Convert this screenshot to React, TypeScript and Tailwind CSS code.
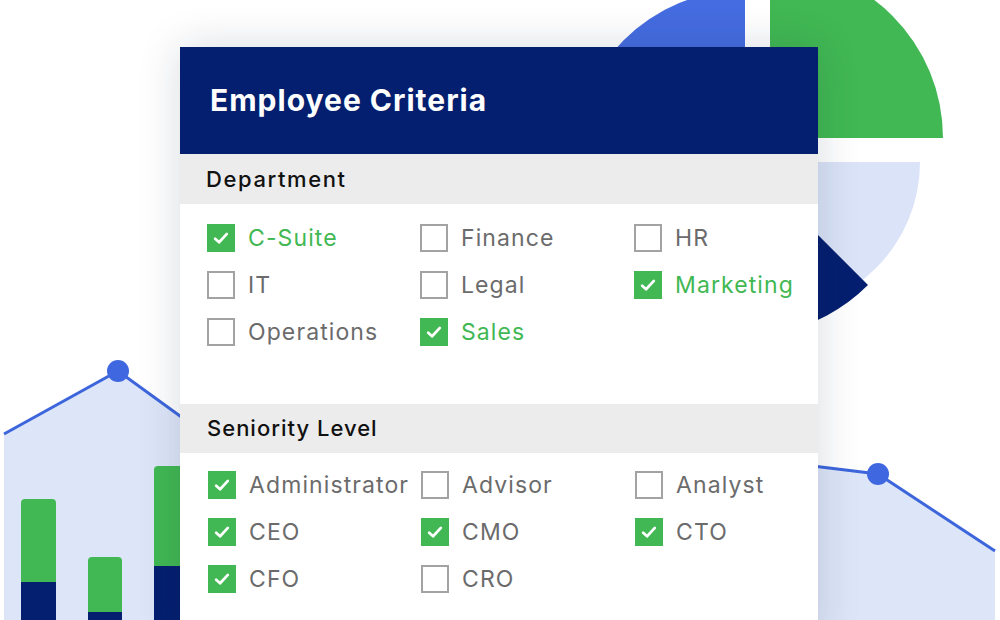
import React from "react";

type Item = { label: string; checked: boolean };

const dept: Item[] = [
  { label: "C-Suite", checked: true },
  { label: "Finance", checked: false },
  { label: "HR", checked: false },
  { label: "IT", checked: false },
  { label: "Legal", checked: false },
  { label: "Marketing", checked: true },
  { label: "Operations", checked: false },
  { label: "Sales", checked: true },
];

const seniority: Item[] = [
  { label: "Administrator", checked: true },
  { label: "Advisor", checked: false },
  { label: "Analyst", checked: false },
  { label: "CEO", checked: true },
  { label: "CMO", checked: true },
  { label: "CTO", checked: true },
  { label: "CFO", checked: true },
  { label: "CRO", checked: false },
];

function Box({ checked }: { checked: boolean }) {
  if (checked) {
    return (
      <span className="flex h-[28px] w-[28px] shrink-0 items-center justify-center bg-[#41b853]">
        <svg width="18" height="18" viewBox="0 0 16 16" fill="none">
          <path d="M2.8 8.6 L6.3 11.8 L13.2 4.4" stroke="white" strokeWidth="2.4" strokeLinecap="round" strokeLinejoin="round" />
        </svg>
      </span>
    );
  }
  return <span className="h-[28px] w-[28px] shrink-0 border-2 border-[#a3a3a3] bg-white" />;
}

function Grid({ items, colorChecked, pad }: { items: Item[]; colorChecked: boolean; pad: string }) {
  return (
    <div className={`grid grid-cols-[213px_214px_1fr] ${pad}`}>
      {items.map((it) => (
        <div key={it.label} className="flex h-[47px] items-center gap-[13px]">
          <Box checked={it.checked} />
          <span
            className={`pt-[2px] text-[23px] leading-none tracking-[1.1px] ${
              it.checked && colorChecked ? "text-[#41b853]" : "text-[#6b6b6b]"
            }`}
          >
            {it.label}
          </span>
        </div>
      ))}
    </div>
  );
}

function Background() {
  return (
    <svg className="absolute inset-0" width="1000" height="620" viewBox="0 0 1000 620">
      {/* pie */}
      <path d="M745,162 L573,162 A172,172 0 0 1 745,-10 Z" fill="#456ce0" />
      <path d="M770,138 L770,-35 A173,173 0 0 1 943,138 Z" fill="#41b853" />
      <path d="M770,162 L920,162 A150,150 0 0 1 770,312 Z" fill="#dae3f7" />
      <path d="M745,162 L868,285 A174,174 0 0 1 571,162 Z" fill="#041f6f" />
      {/* left area chart */}
      <path d="M4,434 L118,371 L220,445 L220,620 L4,620 Z" fill="#dde6f8" />
      <path d="M4,434 L118,371 L220,445" stroke="#3d66dc" strokeWidth="3" fill="none" />
      <circle cx="118" cy="371" r="11" fill="#3f68e0" />
      {/* bars */}
      <path d="M21,503 Q21,499 25,499 L52,499 Q56,499 56,503 L56,620 L21,620 Z" fill="#41b853" />
      <rect x="21" y="582" width="35" height="38" fill="#041f6f" />
      <path d="M88,561 Q88,557 92,557 L118,557 Q122,557 122,561 L122,620 L88,620 Z" fill="#41b853" />
      <rect x="88" y="612" width="34" height="8" fill="#041f6f" />
      <path d="M154,470 Q154,466 158,466 L196,466 Q200,466 200,470 L200,620 L154,620 Z" fill="#41b853" />
      <rect x="154" y="566" width="46" height="54" fill="#041f6f" />
      {/* right area chart */}
      <path d="M780,462 L878,474 L995,551 L995,620 L780,620 Z" fill="#dde6f8" />
      <path d="M780,462 L878,474 L995,551" stroke="#3d66dc" strokeWidth="3" fill="none" />
      <circle cx="878" cy="474" r="11" fill="#3f68e0" />
    </svg>
  );
}

export default function App() {
  return (
    <div
      className="relative h-[620px] w-[1000px] overflow-hidden bg-white pl-[180px] pt-[47px]"
      style={{ fontFamily: "Inter, 'Noto Sans', sans-serif" }}
    >
      <Background />
      <div className="relative z-10 w-[638px] bg-white shadow-[0_0_40px_rgba(20,30,60,0.16)]">
        <div className="flex h-[107px] items-center bg-[#041f6f] px-[30px]">
          <h1 className="text-[30px] font-bold tracking-[1px] text-white">Employee Criteria</h1>
        </div>
        <div className="flex h-[50px] items-center bg-[#ececec] pl-[26px]">
          <span className="text-[22px] font-medium tracking-[1.6px] text-[#111]">Department</span>
        </div>
        <Grid items={dept} colorChecked={true} pad="pl-[27px] pt-[10px] pb-[49px]" />
        <div className="flex h-[49px] items-center bg-[#ececec] pl-[27px]">
          <span className="text-[22px] font-medium tracking-[1px] text-[#111]">Seniority Level</span>
        </div>
        <Grid items={seniority} colorChecked={false} pad="pl-[28px] pt-[8px] pb-[40px]" />
      </div>
    </div>
  );
}
